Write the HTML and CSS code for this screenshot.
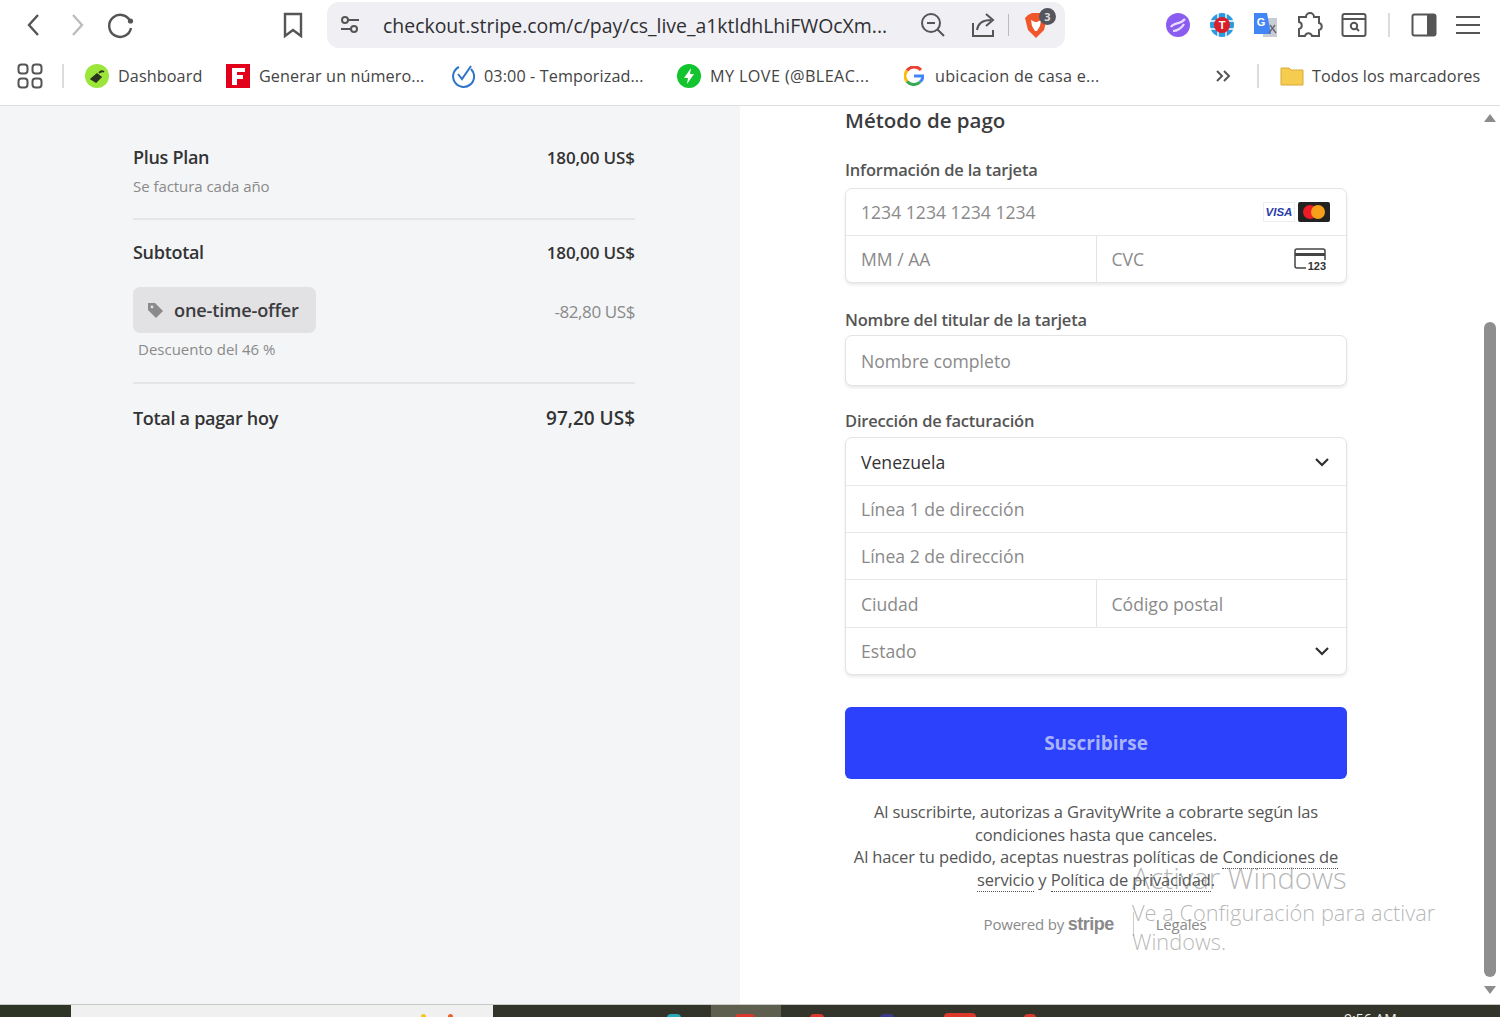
FILE: index.html
```html
<!DOCTYPE html>
<html lang="es">
<head>
    <meta charset="UTF-8">
    <meta name="viewport" content="width=device-width, initial-scale=1.0">
    <title>Checkout</title>
    <link rel="stylesheet" href="styles.css">
</head>
<body>

    <!-- browser toolbar start -->
    <header class="toolbar">
        <span class="tool-btn"><svg width="24" height="28" viewBox="0 0 24 28"><path d="M17 4 L8 14 L17 24" class="ico"/></svg></span>
        <span class="tool-btn"><svg width="24" height="28" viewBox="0 0 24 28"><path d="M8 4 L17 14 L8 24" class="ico ico-off"/></svg></span>
        <span class="tool-btn"><svg width="28" height="28" viewBox="0 0 28 28"><path d="M23.5 11 A11 11 0 1 0 24 17" class="ico"/><circle cx="23.5" cy="10" r="2.6" fill="#555"/></svg></span>

        <span class="tool-btn bookmark-btn"><svg width="22" height="26" viewBox="0 0 22 26"><path d="M3 2 H19 V24 L11 18 L3 24 Z" class="ico"/></svg></span>

        <div class="urlbar">
            <svg class="tune" width="22" height="20" viewBox="0 0 22 20"><circle cx="6" cy="5" r="3" class="ico-thin"/><path d="M9 5 H20 M2 14 H12" class="ico-thin"/><circle cx="15" cy="14" r="3" class="ico-thin"/></svg>
            <span class="url">checkout.stripe.com/c/pay/cs_live_a1ktldhLhiFWOcXm...</span>
            <svg class="zoom-ico" width="26" height="26" viewBox="0 0 26 26"><circle cx="11" cy="11" r="9" class="ico-thin"/><path d="M17.5 17.5 L24 24 M7 11 H15" class="ico-thin"/></svg>
            <svg class="share-ico" width="26" height="26" viewBox="0 0 26 26"><path d="M3 11 V24 H23 V18" class="ico-thin"/><path d="M7 18 C8 11 13 8 21 8 M16 2 L23 8 L16 14" class="ico-thin"/></svg>
            <span class="url-sep"></span>
            <span class="brave">
                <svg width="24" height="27" viewBox="0 0 24 27"><path d="M4 3 L8 1 H16 L20 3 L23 6 L20 18 L12 26 L4 18 L1 6 Z" fill="#f0562a"/><path d="M7 8 L11 10 H13 L17 8 L16 14 L13 19 H11 L8 14 Z" fill="#fff"/></svg>
                <span class="brave-badge">3</span>
            </span>
        </div>

        <div class="ext-icons">
            <span class="tool-btn"><svg width="26" height="26" viewBox="0 0 26 26"><circle cx="13" cy="13" r="12" fill="#8b5cf0"/><path d="M6 15 C9 10 15 13 20 7 M8 19 C12 19 17 16 19 12" stroke="#e8dcff" stroke-width="2.2" fill="none"/></svg></span>
            <span class="tool-btn"><svg width="26" height="26" viewBox="0 0 26 26"><circle cx="13" cy="13" r="12" fill="#2a9be0"/><path d="M1 9 H25 M1 17 H25 M9 1 V25 M17 1 V25" stroke="#fff" stroke-width="1.4"/><circle cx="13" cy="13" r="8" fill="#d81f2a"/><text x="13" y="17" class="t-mark">T</text></svg></span>
            <span class="tool-btn"><svg width="26" height="26" viewBox="0 0 26 26"><path d="M10 6 H24 V25 H10 Z" fill="#c9cdd2"/><path d="M1 1 H14 L18 22 H1 Z" fill="#4285f4"/><text x="8" y="14" class="g-mark">G</text><path d="M17 13 L23 21 M22 13 L16 21" stroke="#667" stroke-width="1.4"/></svg></span>
            <span class="tool-btn"><svg width="26" height="26" viewBox="0 0 26 26"><path d="M9 5 A4 4 0 0 1 17 5 H22 V11 A3.6 3.6 0 0 1 22 18 V24 H15 A3.6 3.6 0 0 0 8 24 H2 V17 A3.6 3.6 0 0 0 2 10 H2 V5 Z" class="ico-thin"/></svg></span>
            <span class="tool-btn"><svg width="26" height="26" viewBox="0 0 26 26"><rect x="1.5" y="2" width="23" height="22" rx="2" class="ico-thin"/><path d="M2 7 H24" class="ico-thin"/><circle cx="13" cy="14" r="3.2" class="ico-thin"/><path d="M15.5 16.5 L18 19" class="ico-thin"/></svg></span>
            <span class="bar-sep"></span>
            <span class="tool-btn panel-btn"><svg width="26" height="24" viewBox="0 0 26 24"><rect x="1.5" y="1.5" width="23" height="21" rx="2" class="ico-thin"/><rect x="16" y="2" width="8" height="20" fill="#555"/></svg></span>
            <span class="tool-btn"><svg width="26" height="22" viewBox="0 0 26 22"><path d="M1 3 H25 M1 11 H25 M1 19 H25" class="ico-thin"/></svg></span>
        </div>
    </header>

    <nav class="bookmarks">
        <svg class="apps" width="26" height="26" viewBox="0 0 26 26"><rect x="1.5" y="1.5" width="9" height="9" rx="3" class="ico-thin"/><rect x="15.5" y="1.5" width="9" height="9" rx="3" class="ico-thin"/><rect x="1.5" y="15.5" width="9" height="9" rx="3" class="ico-thin"/><rect x="15.5" y="15.5" width="9" height="9" rx="3" class="ico-thin"/></svg>
        <span class="bar-sep bm-sep"></span>

        <a class="bm bm-1"><svg width="24" height="24" viewBox="0 0 24 24"><circle cx="12" cy="12" r="12" fill="#9ce63c"/><path d="M6 15 L12 10 L16 13 L11 18 Z M14 9 C16 6 18 7 19 8" fill="#2a3320" stroke="#2a3320" stroke-width="1.5"/></svg>Dashboard</a>
        <a class="bm bm-2"><svg width="24" height="24" viewBox="0 0 24 24"><rect width="24" height="24" fill="#e3001b"/><path d="M6 4 H19 V8 H11 V11 H17 V15 H11 V21 H6 Z" fill="#fff"/></svg>Generar un número...</a>
        <a class="bm bm-3"><svg width="24" height="26" viewBox="0 0 24 26"><path d="M8 4 A10.5 10.5 0 1 0 20 6" fill="none" stroke="#2e74c9" stroke-width="2"/><path d="M7 11 L11 16 L20 3" fill="none" stroke="#2e74c9" stroke-width="2"/></svg>03:00 - Temporizad...</a>
        <a class="bm bm-4"><svg width="24" height="24" viewBox="0 0 24 24"><circle cx="12" cy="12" r="12" fill="#12c52f"/><path d="M14 4 L7 14 H11 L10 20 L17 10 H13 Z" fill="#fff"/></svg>MY LOVE (@BLEAC...</a>
        <a class="bm bm-5"><svg width="20" height="20" viewBox="0 0 20 20"><path d="M17 4 A9 9 0 0 0 3 4.500" fill="none" stroke="#ea4335" stroke-width="3"/><path d="M3 4.500 A9 9 0 0 0 3 15.500" fill="none" stroke="#fbbc05" stroke-width="3"/><path d="M3 15.500 A9 9 0 0 0 16 16" fill="none" stroke="#34a853" stroke-width="3"/><path d="M16 16 A9 9 0 0 0 19 10 H10" fill="none" stroke="#4285f4" stroke-width="3"/></svg>ubicacion de casa e...</a>

        <svg class="more" width="16" height="14" viewBox="0 0 16 14"><path d="M2 2 L7 7 L2 12 M9 2 L14 7 L9 12" class="ico-thin"/></svg>
        <span class="bar-sep more-sep"></span>
        <a class="bm bm-all"><svg width="24" height="20" viewBox="0 0 24 20"><path d="M1 2 H9 L11 4 H23 V19 H1 Z" fill="#f5cc4e" stroke="#d9a93a"/></svg>Todos los marcadores</a>
    </nav>
    <!-- browser toolbar end -->

    <main class="page">
        <!-- order summary start -->
        <section class="summary">
            <div class="sum-row plan-row">
                <span class="sum-name">Plus Plan</span>
                <span class="sum-price">180,00 US$</span>
            </div>
            <p class="sum-note">Se factura cada año</p>
            <hr class="sum-line">

            <div class="sum-row subtotal-row">
                <span class="sum-name">Subtotal</span>
                <span class="sum-price">180,00 US$</span>
            </div>
            <div class="sum-row coupon-row">
                <span class="coupon">
                    <svg width="17" height="17" viewBox="0 0 17 17"><path d="M1 1 H8 L16 9 L9 16 L1 8 Z" fill="#8a8a8c"/><circle cx="5" cy="5" r="1.400" fill="#e2e2e4"/></svg>
                    one-time-offer
                </span>
                <span class="discount">-82,80 US$</span>
            </div>
            <p class="coupon-note">Descuento del 46 %</p>
            <hr class="sum-line total-line">

            <div class="sum-row">
                <span class="sum-name">Total a pagar hoy</span>
                <span class="sum-price total-price">97,20 US$</span>
            </div>
        </section>
        <!-- order summary end -->

        <!-- payment form start -->
        <section class="pay">
            <div class="pay-form">
                <h2 class="pay-title">Método de pago</h2>

                <label class="field-label label-card">Información de la tarjeta</label>
                <div class="group group-card">
                    <div class="cell cell-card">
                        <span class="ph">1234 1234 1234 1234</span>
                        <span class="visa">VISA</span>
                        <svg class="mc" width="32" height="20" viewBox="0 0 32 20"><rect width="32" height="20" rx="2" fill="#222"/><circle cx="12" cy="10" r="7" fill="#eb1c26"/><circle cx="20" cy="10" r="7" fill="#f79e1b"/></svg>
                    </div>
                    <div class="cell-row">
                        <div class="cell"><span class="ph">MM / AA</span></div>
                        <div class="cell">
                            <span class="ph">CVC</span>
                            <span class="cvc-ico">
                                <svg width="32" height="22" viewBox="0 0 32 22"><path d="M14 20 H3 A2 2 0 0 1 1 18 V3 A2 2 0 0 1 3 1 H29 A2 2 0 0 1 31 3 V12" fill="none" stroke="#444" stroke-width="1.500"/><rect x="1" y="5" width="30" height="3" fill="#444"/></svg>
                                <b class="cvc-num">123</b>
                            </span>
                        </div>
                    </div>
                </div>

                <label class="field-label label-name">Nombre del titular de la tarjeta</label>
                <div class="group">
                    <div class="cell cell-name"><span class="ph">Nombre completo</span></div>
                </div>

                <label class="field-label label-addr">Dirección de facturación</label>
                <div class="group">
                    <div class="cell">
                        <span class="val">Venezuela</span>
                        <svg class="chev" width="16" height="10" viewBox="0 0 16 10"><path d="M2 2 L8 8 L14 2"/></svg>
                    </div>
                    <div class="cell"><span class="ph">Línea 1 de dirección</span></div>
                    <div class="cell"><span class="ph">Línea 2 de dirección</span></div>
                    <div class="cell-row">
                        <div class="cell"><span class="ph">Ciudad</span></div>
                        <div class="cell"><span class="ph">Código postal</span></div>
                    </div>
                    <div class="cell">
                        <span class="ph">Estado</span>
                        <svg class="chev" width="16" height="10" viewBox="0 0 16 10"><path d="M2 2 L8 8 L14 2"/></svg>
                    </div>
                </div>

                <button class="submit">Suscribirse</button>

                <p class="terms">Al suscribirte, autorizas a GravityWrite a cobrarte según las condiciones hasta que canceles.<br>Al hacer tu pedido, aceptas nuestras políticas de <a>Condiciones de servicio</a> y <a>Política de privacidad</a>.</p>

                <div class="powered">
                    <span>Powered by <b class="stripe">stripe</b></span>
                    <span class="pow-sep"></span>
                    <span>Legales</span>
                </div>
            </div>

            <div class="scrollbar">
                <span class="arrow-up"></span>
                <span class="thumb"></span>
                <span class="arrow-down"></span>
            </div>

            <div class="watermark">
                <p class="wm-title">Activar Windows</p>
                <p class="wm-text">Ve a Configuración para activar Windows.</p>
            </div>
        </section>
        <!-- payment form end -->
    </main>

    <footer class="taskbar">
        <span class="tb tb-a"></span>
        <span class="tb tb-search"><i class="dot dot-y"></i><i class="dot dot-o"></i></span>
        <span class="tb tb-b"><i class="peek peek-teal"></i></span>
        <span class="tb tb-active"><i class="peek peek-red"></i></span>
        <span class="tb tb-c">
            <i class="peek peek-red2"></i><i class="peek peek-blue"></i><i class="peek peek-wide"></i><i class="peek peek-red3"></i>
            <span class="clock">9:56 AM</span>
        </span>
    </footer>

</body>
</html>
```

FILE: styles.css
```css
* {
    box-sizing: border-box;
}

html, body {
    margin: 0;
    padding: 0;
    height: 1017px;
    overflow: hidden;
}

body {
    font-family: "Open Sans", "Noto Sans", Arial, sans-serif;
    color: #333;
    background: #fff;
    display: flex;
    flex-direction: column;
}

p, h2 {
    margin: 0;
}

.ico {
    fill: none;
    stroke: #555;
    stroke-width: 2.4;
}

.ico-off {
    stroke: #bdbdbd;
}

.ico-thin {
    fill: none;
    stroke: #555;
    stroke-width: 2;
}

.t-mark {
    font: bold 11px "Liberation Sans", sans-serif;
    fill: #fff;
    text-anchor: middle;
}

.g-mark {
    font: bold 11px "Liberation Sans", sans-serif;
    fill: #fff;
    text-anchor: middle;
}

/* toolbar */
.toolbar {
    height: 50px;
    flex: none;
    display: flex;
    align-items: center;
    padding-left: 11px;
}

.tool-btn {
    width: 44px;
    display: flex;
    justify-content: center;
    align-items: center;
}

.bookmark-btn {
    margin-left: 128px;
}

.urlbar {
    margin-left: 12px;
    width: 738px;
    height: 46px;
    background: #f0f0f4;
    border-radius: 12px;
    display: flex;
    align-items: center;
    padding-left: 12px;
}

.url {
    margin-left: 22px;
    width: 526px;
    font-size: 19.450px;
    color: #2f2f33;
    white-space: nowrap;
}

.zoom-ico {
    margin-left: 11px;
}

.share-ico {
    margin-left: 24px;
}

.url-sep {
    width: 1px;
    height: 22px;
    background: #bbb;
    margin-left: 12px;
}

.brave {
    position: relative;
    margin-left: 15px;
    display: flex;
}

.brave-badge {
    position: absolute;
    top: -4px;
    left: 15px;
    width: 17px;
    height: 17px;
    border-radius: 50%;
    background: #55555d;
    color: #ddd;
    font-size: 11px;
    font-weight: 700;
    text-align: center;
    line-height: 17px;
}

.ext-icons {
    margin-left: 91px;
    display: flex;
    align-items: center;
}

.bar-sep {
    width: 2px;
    height: 24px;
    background: #dcdcdc;
    flex: none;
}

.ext-icons .bar-sep {
    margin-left: 12px;
}

.panel-btn {
    margin-left: 12px;
}

/* bookmarks */
.bookmarks {
    height: 56px;
    flex: none;
    display: flex;
    align-items: center;
    padding-left: 17px;
    padding-bottom: 4px;
    border-bottom: 1px solid #dedede;
    font-size: 16.200px;
    color: #444;
}

.bm {
    display: flex;
    align-items: center;
    gap: 9px;
    white-space: nowrap;
    letter-spacing: 0.1px;
}

.bm-sep {
    margin-left: 19px;
}

.bm-1 {
    margin-left: 21px;
    width: 141px;
}

.bm-2 {
    width: 225px;
}

.bm-3 {
    width: 226px;
}

.bm-4 {
    width: 227px;
    letter-spacing: 0.4px;
}

.bm-5 {
    gap: 11px;
    width: 311px;
    letter-spacing: 0.25px;
}

.more {
    flex: none;
}

.more-sep {
    margin-left: 26px;
}

.bm-all {
    margin-left: 21px;
    gap: 8px;
}

/* page */
.page {
    flex: 1;
    display: flex;
    min-height: 0;
}

.summary {
    width: 740px;
    flex: none;
    background: #f4f5f7;
    padding: 39px 105px 0 133px;
}

.sum-row {
    display: flex;
    justify-content: space-between;
    align-items: center;
}

.sum-name {
    font-size: 18px;
    font-weight: 600;
    color: #333;
    letter-spacing: -0.3px;
}

.sum-price {
    font-size: 17px;
    font-weight: 600;
    letter-spacing: -0.1px;
}

.total-price {
    font-size: 19px;
    letter-spacing: 0;
}

.sum-note {
    margin-top: 7px;
    font-size: 15px;
    color: #8a8a8a;
    letter-spacing: -0.05px;
}

.sum-line {
    margin: 22px 0 20px;
    border: 0;
    border-top: 2px solid #e6e6e8;
}

.coupon-row {
    margin-top: 23px;
}

.coupon {
    width: 183px;
    height: 46px;
    border-radius: 7px;
    background: #e2e2e4;
    display: flex;
    align-items: center;
    gap: 10px;
    padding-left: 14px;
    font-size: 18.200px;
    font-weight: 600;
    color: #3c3c3e;
    letter-spacing: -0.2px;
}

.discount {
    margin-top: 3px;
    font-size: 17px;
    color: #8a8a8a;
    letter-spacing: -0.4px;
}

.coupon-note {
    margin: 6px 0 0 5px;
    font-size: 15px;
    color: #8a8a8a;
}

.total-line {
    margin: 23px 0 21px;
}

.pay {
    position: relative;
    flex: 1;
    display: flex;
}

.pay-form {
    width: 740px;
    flex: none;
    padding: 0 133px 0 105px;
}

.pay-title {
    font-size: 20.500px;
    font-weight: 600;
    color: #3c3c3e;
    line-height: 28px;
}

.field-label {
    display: block;
    margin-top: 22px;
    margin-bottom: 6px;
    font-size: 16.500px;
    font-weight: 600;
    line-height: 23px;
    color: #555;
    letter-spacing: -0.2px;
}

.label-card {
    margin-top: 24px;
    margin-bottom: 7px;
}

.label-name {
    margin-top: 25px;
    margin-bottom: 4px;
}

.label-addr {
    margin-top: 23px;
    margin-bottom: 5px;
}

.group {
    border: 1px solid #e4e4e4;
    border-radius: 7px;
    box-shadow: 0 2px 3px rgba(0, 0, 0, 0.09);
    background: #fff;
}

.cell {
    height: 47px;
    display: flex;
    align-items: center;
    justify-content: space-between;
    padding: 0 15px;
    font-size: 17.600px;
    border-top: 1px solid #e8e8e8;
}

.group > .cell:first-child {
    border-top: 0;
}

.group-card .cell {
    height: 46px;
}

.cell-row {
    display: flex;
    border-top: 1px solid #e8e8e8;
}

.cell-row .cell {
    flex: 1;
    border-top: 0;
}

.cell-row .cell + .cell {
    border-left: 1px solid #e4e4e4;
}

.group .cell-name {
    height: 49px;
}

.cell-card {
    justify-content: flex-start;
}

.ph {
    color: #8a8a8a;
    white-space: nowrap;
}

.val {
    color: #333;
}

.visa {
    margin-left: auto;
    width: 32px;
    height: 20px;
    border: 1px solid #eee;
    font: italic bold 11.500px/18px "Liberation Sans", sans-serif;
    color: #2a3ea8;
    text-align: center;
}

.mc {
    margin-left: 3px;
    margin-right: 1px;
}

.cvc-ico {
    position: relative;
    display: flex;
    margin-right: 5px;
}

.cvc-num {
    position: absolute;
    right: 0;
    bottom: -2px;
    font: bold 11px/11px "Liberation Sans", sans-serif;
    background: #fff;
    color: #333;
    padding-left: 2px;
}

.chev {
    margin-right: 1px;
    fill: none;
    stroke: #2f2f2f;
    stroke-width: 2.200;
}

.submit {
    display: block;
    width: 100%;
    height: 72px;
    margin-top: 32px;
    border: 0;
    border-radius: 6px;
    background: #2b41fb;
    color: #a9b3f8;
    font-family: inherit;
    font-size: 19px;
    font-weight: 700;
}

.terms {
    margin-top: 22px;
    text-align: center;
    font-size: 16.500px;
    line-height: 22.500px;
    color: #555;
    letter-spacing: -0.13px;
}

.terms a {
    border-bottom: 1px dotted #555;
}

.powered {
    margin-top: 21px;
    display: flex;
    align-items: center;
    justify-content: center;
    font-size: 15px;
    color: #8a8a8a;
    letter-spacing: -0.2px;
    padding-right: 2px;
}

.stripe {
    font: bold 18px "Liberation Sans", sans-serif;
    letter-spacing: -0.5px;
}

.pow-sep {
    width: 1px;
    height: 24px;
    margin: 0 22px 0 19px;
    background: #ccc;
}

.scrollbar {
    flex: 1;
    position: relative;
    display: flex;
    flex-direction: column;
    align-items: center;
    padding-top: 8px;
}

.arrow-up {
    border: 6px solid transparent;
    border-top: 0;
    border-bottom: 8px solid #8c8c8c;
}

.thumb {
    width: 12px;
    height: 655px;
    margin-top: 200px;
    border-radius: 6px;
    background: #8e8e8e;
}

.arrow-down {
    margin-top: 9px;
    border: 6px solid transparent;
    border-bottom: 0;
    border-top: 8px solid #8c8c8c;
}

/* windows watermark, it sits over the form */
.watermark {
    position: absolute;
    left: 392px;
    top: 753px;
    width: 320px;
    color: rgba(110, 110, 110, 0.5);
    font-weight: 300;
}

.wm-title {
    font-size: 29.200px;
    line-height: 38px;
}

.wm-text {
    margin-top: 1px;
    font-size: 21.800px;
    line-height: 29px;
}

/* taskbar, only its top edge is in the picture */
.taskbar {
    height: 13px;
    flex: none;
    display: flex;
    overflow: hidden;
    background: #33352a;
    border-top: 1px solid #c9c9c5;
}

.tb {
    position: relative;
    display: block;
    height: 13px;
}

.tb-a {
    width: 71px;
    background: #2c3526;
}

.tb-search {
    width: 422px;
    background: #f0f0f0;
}

.tb-b {
    width: 218px;
}

.tb-active {
    width: 70px;
    background: #5f5f50;
}

.tb-c {
    flex: 1;
}

.dot, .peek {
    position: absolute;
    display: block;
}

.dot {
    top: 9px;
    width: 5px;
    height: 5px;
    border-radius: 50%;
}

.dot-y {
    left: 350px;
    background: #f5c518;
}

.dot-o {
    left: 377px;
    background: #e8642c;
}

.peek {
    top: 9px;
    height: 6px;
    border-radius: 4px 4px 0 0;
}

.peek-teal {
    left: 174px;
    width: 14px;
    background: #27a9b8;
}

.peek-red {
    left: 24px;
    width: 20px;
    background: #d8392b;
}

.peek-red2 {
    left: 29px;
    width: 14px;
    background: #d8392b;
}

.peek-blue {
    left: 99px;
    width: 14px;
    background: #3b3a8c;
}

.peek-wide {
    left: 163px;
    width: 32px;
    top: 8px;
    background: #d8392b;
}

.peek-red3 {
    left: 243px;
    width: 12px;
    background: #d8392b;
}

.clock {
    position: absolute;
    left: 563px;
    top: 6px;
    color: #f2f2f2;
    font-size: 14px;
    line-height: 16px;
    white-space: nowrap;
}
```
